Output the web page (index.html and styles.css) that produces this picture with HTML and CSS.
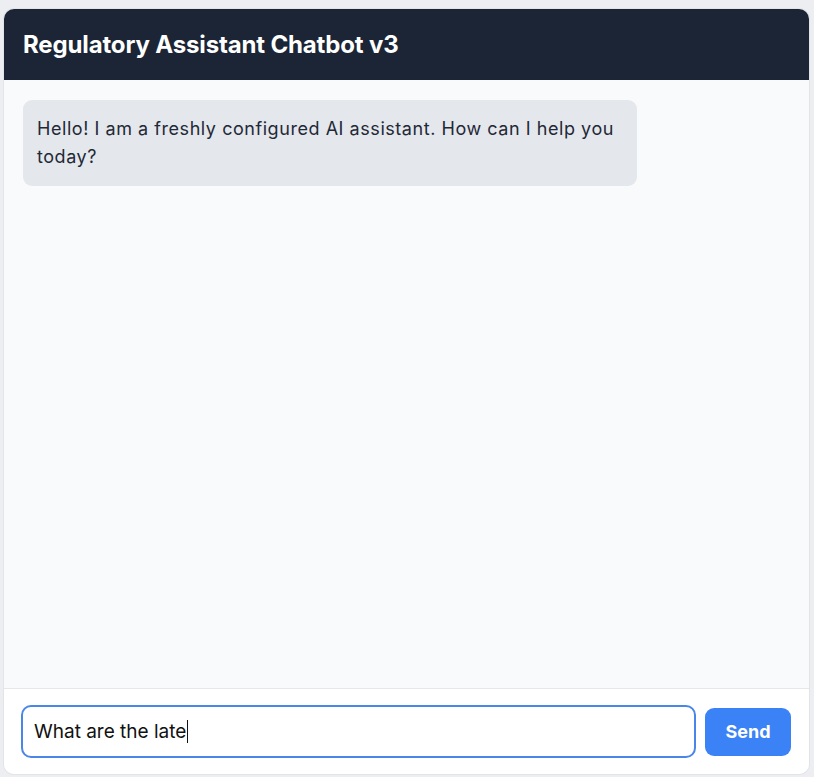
FILE: index.html
```html
<!DOCTYPE html>
<html lang="en">
<head>
<meta charset="utf-8">
<title>Regulatory Assistant Chatbot v3</title>
<link rel="stylesheet" href="styles.css">
</head>
<body>
<div class="chat">
  <header class="chat-header">
    <h1 class="chat-title">Regulatory Assistant Chatbot v3</h1>
  </header>
  <main class="messages">
    <div class="bubble bot">Hello! I am a freshly configured AI assistant. How can I help you today?</div>
  </main>
  <footer class="composer">
    <div class="input-box"><span class="input-text">What are the late</span><span class="caret"></span></div>
    <button class="send-btn">Send</button>
  </footer>
</div>
</body>
</html>
```

FILE: styles.css
```css
html, body {
  margin: 0;
  padding: 0;
  background: #eceef1;
  font-family: Inter, "Noto Sans", sans-serif;
}
body {
  padding: 9px 4px 0 4px;
  height: 777px;
  box-sizing: border-box;
}
.chat {
  width: 805px;
  height: 765px;
  background: #f9fafb;
  border-radius: 10px;
  display: flex;
  flex-direction: column;
  overflow: hidden;
  box-shadow: 0 0 0 1px #e2e4e8;
}
.chat-header {
  background: #1b2535;
  height: 71px;
  display: flex;
  align-items: center;
  padding: 0 19px;
  flex-shrink: 0;
}
.chat-title {
  margin: 0;
  color: #ffffff;
  font-size: 24px;
  font-weight: 700;
  letter-spacing: -0.15px;
}
.messages {
  flex: 1;
  padding: 20px 19px;
  display: flex;
  flex-direction: column;
  align-items: flex-start;
}
.bubble {
  max-width: 614px;
  box-sizing: border-box;
  padding: 15px 14px;
  border-radius: 9px;
  font-size: 18px;
  letter-spacing: 0.55px;
  line-height: 28px;
  color: #1f2937;
}
.bot {
  background: #e4e7eb;
  width: 614px;
}
.composer {
  border-top: 1px solid #e5e7eb;
  background: #ffffff;
  height: 86px;
  box-sizing: border-box;
  display: flex;
  align-items: center;
  padding: 0 18px 0 17px;
  gap: 9px;
  flex-shrink: 0;
}
.input-box {
  flex: 1;
  height: 53px;
  box-sizing: border-box;
  border: 2px solid #4a86e8;
  border-radius: 10px;
  background: #ffffff;
  display: flex;
  align-items: center;
  padding: 0 11px;
  font-size: 19px;
  color: #111111;
}
.caret {
  display: inline-block;
  width: 1px;
  height: 23px;
  background: #111;
  margin-left: 1px;
}
.send-btn {
  width: 86px;
  height: 48px;
  border: none;
  border-radius: 9px;
  background: #3b82f6;
  color: #ffffff;
  font-family: Inter, "Noto Sans", sans-serif;
  font-size: 18px;
  font-weight: 700;
  padding: 0;
}
```
